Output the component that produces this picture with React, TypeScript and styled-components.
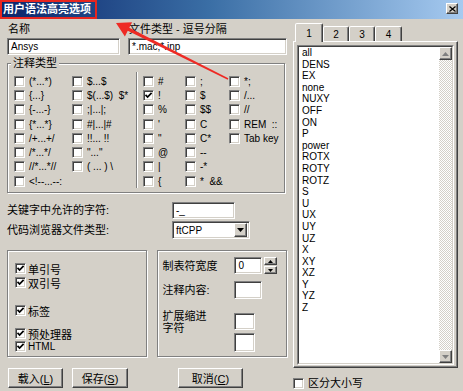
import React from "react";
import styled, { createGlobalStyle, css } from "styled-components";

const GlobalStyle = createGlobalStyle`
  html, body { margin: 0; padding: 0; background: #D4D0C8; }
  * { box-sizing: border-box; }
`;

const FONT = `"Liberation Sans", "Noto Sans CJK SC", sans-serif`;

const sunken = css`
  background: #fff;
  border: 1px solid;
  border-color: #808080 #fff #fff #808080;
  box-shadow: inset 1px 1px 0 #404040, inset -1px -1px 0 #D4D0C8;
`;

const raised = css`
  background: #D4D0C8;
  border: 1px solid;
  border-color: #fff #404040 #404040 #fff;
  box-shadow: inset -1px -1px 0 #808080;
`;

const etched = css`
  border: 1px solid #808080;
  box-shadow: 1px 1px 0 #fff, inset 1px 1px 0 #fff;
`;

const Window = styled.div`
  position: relative;
  width: 463px;
  height: 391px;
  background: #D4D0C8;
  overflow: hidden;
  font-family: ${FONT};
  color: #000;
  display: flex;
  flex-direction: column;
`;

const TitleBar = styled.div`
  height: 19px;
  flex: none;
  background: linear-gradient(to right, #0A246A 0%, #3A6EA5 45%, #A6CAF0 100%);
  display: flex;
  align-items: center;
  justify-content: space-between;
  padding: 0 5px 0 3px;
`;

const TitleText = styled.span`
  color: #fff;
  font-weight: bold;
  font-size: 11px;
  line-height: 13px;
`;

const CloseButton = styled.div`
  ${raised};
  width: 12px;
  height: 11px;
  margin-top: -2px;
  display: flex;
  align-items: center;
  justify-content: center;
`;

const Body = styled.div`
  display: flex;
  padding: 3px 0 0 7px;
`;

const LeftCol = styled.div`
  width: 280px;
  flex: none;
  display: flex;
  flex-direction: column;
`;

const FieldRow = styled.div`
  display: flex;
  gap: 8px;
`;

const Field = styled.div<{ $w: number }>`
  width: ${(p) => p.$w}px;
  display: flex;
  flex-direction: column;
  gap: 1px;
`;

const Label = styled.span<{ $size?: number }>`
  font-size: ${(p) => p.$size ?? 11}px;
  line-height: 15px;
  padding-left: 1px;
  white-space: pre;
`;

const Edit = styled.div<{ $w?: number; $h?: number }>`
  ${sunken};
  width: ${(p) => (p.$w ? `${p.$w}px` : "100%")};
  height: ${(p) => p.$h ?? 17}px;
  padding: 0 3px;
  font-size: 10px;
  display: flex;
  align-items: center;
  white-space: pre;
  flex: none;
`;

const Group = styled.fieldset`
  margin: 1px 2px 0 0;
  padding: 4px 0 4px 0;
  min-width: 0;
  ${etched};
`;

const Legend = styled.legend`
  margin-left: 3px;
  padding: 0 2px;
  font-size: 11px;
  line-height: 14px;
  background: #D4D0C8;
`;

const OptGrid = styled.div`
  display: flex;
  padding-left: 6px;
`;

const OptCol = styled.div<{ $w: number }>`
  width: ${(p) => p.$w}px;
  flex: none;
  display: flex;
  flex-direction: column;
`;

const Opt = styled.div<{ $gap?: number }>`
  height: 14.3px;
  display: flex;
  align-items: center;
  gap: ${(p) => p.$gap ?? 4}px;
  font-size: 10px;
  white-space: pre;
`;

const Separator = styled.div`
  width: 2px;
  border-left: 1px solid #808080;
  border-right: 1px solid #fff;
  margin: -2px 5px 0 0;
  flex: none;
`;

const CheckBoxFrame = styled.span`
  ${sunken};
  width: 11px;
  height: 11px;
  flex: none;
  display: flex;
  align-items: center;
  justify-content: center;
`;

const KeyGrid = styled.div`
  margin-top: 9px;
  display: grid;
  grid-template-columns: 165px auto;
  row-gap: 2px;
  align-items: center;
`;

const KeyLabel = styled.span`
  font-size: 11px;
  line-height: 15px;
`;

const Combo = styled.div`
  ${sunken};
  width: 78px;
  height: 18px;
  display: flex;
  align-items: center;
  justify-content: space-between;
  padding: 2px 2px 2px 3px;
  font-size: 10px;
`;

const ComboButton = styled.div`
  ${raised};
  width: 13px;
  height: 14px;
  display: flex;
  align-items: center;
  justify-content: center;
`;

const GroupsRow = styled.div`
  margin-top: 11px;
  display: flex;
  gap: 10px;
  height: 107px;
`;

const FlagsBox = styled.div`
  ${etched};
  width: 141px;
  padding: 11px 0 0 7px;
  display: flex;
  flex-direction: column;
`;

const Flag = styled.div<{ $mt: number; $latin?: boolean }>`
  margin-top: ${(p) => p.$mt}px;
  height: 13px;
  display: flex;
  align-items: center;
  gap: 2px;
  font-size: ${(p) => (p.$latin ? 10 : 11)}px;
`;

const SettingsBox = styled.div`
  ${etched};
  width: 130px;
  padding: 6px 0 0 4px;
  display: grid;
  grid-template-columns: 72px auto;
  row-gap: 7px;
  align-content: start;
`;

const SettingLabel = styled.span<{ $top?: boolean }>`
  font-size: 11px;
  line-height: 12px;
  align-self: ${(p) => (p.$top ? "start" : "center")};
  margin-top: ${(p) => (p.$top ? 4 : 0)}px;
`;

const Controls = styled.div<{ $mt?: number }>`
  display: flex;
  flex-direction: column;
  gap: 3px;
  margin-top: ${(p) => p.$mt ?? 0}px;
`;

const SpinWrap = styled.div`
  display: flex;
  gap: 2px;
`;

const Spinner = styled.div`
  width: 13px;
  height: 17px;
  display: flex;
  flex-direction: column;
  gap: 1px;
`;

const SpinButton = styled.div`
  ${raised};
  flex: 1;
  display: flex;
  align-items: center;
  justify-content: center;
`;

const ButtonRow = styled.div`
  margin-top: 11px;
  display: flex;
  padding-left: 1px;
`;

const Button = styled.div<{ $w: number; $ml?: number }>`
  ${raised};
  width: ${(p) => p.$w}px;
  height: 20px;
  margin-left: ${(p) => p.$ml ?? 0}px;
  font-size: 11px;
  display: flex;
  align-items: center;
  justify-content: center;
  white-space: pre;
`;

const RightCol = styled.div`
  margin-left: 6px;
  padding-top: 1px;
  display: flex;
  flex-direction: column;
`;

const TabStrip = styled.div`
  display: flex;
  align-items: flex-end;
  padding-left: 2px;
  height: 18px;
`;

const Tab = styled.div<{ $active?: boolean; $w: number }>`
  position: relative;
  z-index: ${(p) => (p.$active ? 1 : 0)};
  width: ${(p) => p.$w}px;
  height: ${(p) => (p.$active ? 19 : 15)}px;
  margin-bottom: ${(p) => (p.$active ? -1 : 0)}px;
  background: #D4D0C8;
  border: 1px solid;
  border-bottom: none;
  border-color: #fff #404040 transparent #fff;
  box-shadow: inset -1px 0 0 #808080;
  border-radius: 2px 2px 0 0;
  display: flex;
  align-items: center;
  justify-content: center;
  font-size: 10px;
  padding-top: ${(p) => (p.$active ? 0 : 1)}px;
`;

const TabPanel = styled.div`
  ${raised};
  width: 165px;
  height: 327px;
  padding: 3px 2px 2px 3px;
`;

const ListOuter = styled.div`
  width: 157px;
  height: 320px;
  border: 1px solid;
  border-color: #808080 #fff #fff #808080;
`;

const ListInner = styled.div`
  height: 100%;
  border: 1px solid;
  border-color: #404040 #D4D0C8 #D4D0C8 #404040;
  background: #fff;
  display: flex;
`;

const Items = styled.div`
  flex: 1;
  padding-left: 3px;
  font-size: 10px;
  line-height: 11.6px;
`;

const Scrollbar = styled.div`
  width: 13px;
  flex: none;
  display: flex;
  flex-direction: column;
  background-color: #D4D0C8;
  background-image: repeating-conic-gradient(#fff 0 25%, #D4D0C8 0 50%);
  background-size: 2px 2px;
`;

const ScrollButton = styled.div`
  ${raised};
  height: 13px;
  flex: none;
  display: flex;
  align-items: center;
  justify-content: center;
`;

const ScrollTrack = styled.div`
  flex: 1;
`;

const CaseRow = styled.div`
  margin-top: 9px;
  display: flex;
  align-items: center;
  gap: 4px;
  font-size: 11px;
  line-height: 13px;
`;

const Overlay = styled.svg`
  position: absolute;
  left: 0;
  top: 0;
  pointer-events: none;
`;

const Check = ({ checked }: { checked?: boolean }) => (
  <CheckBoxFrame>
    {checked && (
      <svg width="9" height="9" viewBox="0 0 9 9">
        <path d="M1.5 3.8 L3.6 6 L7.6 1.8" fill="none" stroke="#000" strokeWidth="1.7" />
      </svg>
    )}
  </CheckBoxFrame>
);

const Tri = ({ up, color = "#000" }: { up?: boolean; color?: string }) => (
  <svg width="7" height="4" viewBox="0 0 7 4">
    <path d={up ? "M0 4 L3.5 0 L7 4 Z" : "M0 0 L7 0 L3.5 4 Z"} fill={color} />
  </svg>
);

const col1 = ["(*...*)", "{...}", "{-...-}", "{*...*}", "/+...+/", "/*...*/", "//*...*//", "<!--...--:"];
const col2 = ["$...$", "$(...$)  $*", ";|...|;", "#|...|#", "!!... !!", "\"...\"", "( ... ) \\"];
const col3 = ["#", "!", "%", "'", "\"", "@", "|", "{"];
const col4 = [";", "$", "$$", "C", "C*", "--", "-*", "*  &&"];
const col5 = ["*;", "/...", "//", "REM  ::", "Tab key"];

const items = [
  "all", "DENS", "EX", "none", "NUXY", "OFF", "ON", "P", "power", "ROTX", "ROTY", "ROTZ",
  "S", "U", "UX", "UY", "UZ", "X", "XY", "XZ", "Y", "YZ", "Z",
];

const OptColumn = ({ w, labels, checked = [] }: { w: number; labels: string[]; checked?: number[] }) => (
  <OptCol $w={w}>
    {labels.map((l, i) => (
      <Opt key={i}>
        <Check checked={checked.includes(i)} />
        <span>{l}</span>
      </Opt>
    ))}
  </OptCol>
);

export default function App() {
  return (
    <Window>
      <GlobalStyle />
      <TitleBar>
        <TitleText>用户语法高亮选项</TitleText>
        <CloseButton>
          <svg width="7" height="6" viewBox="0 0 7 6">
            <path d="M0.5 0.5 L6.5 5.5 M6.5 0.5 L0.5 5.5" stroke="#000" strokeWidth="1.2" />
          </svg>
        </CloseButton>
      </TitleBar>
      <Body>
        <LeftCol>
          <FieldRow>
            <Field $w={113}>
              <Label>名称</Label>
              <Edit>Ansys</Edit>
            </Field>
            <Field $w={159}>
              <Label>文件类型 - 逗号分隔</Label>
              <Edit>*.mac;*.inp</Edit>
            </Field>
          </FieldRow>
          <Group>
            <Legend>注释类型</Legend>
            <OptGrid>
              <OptColumn w={58} labels={col1} />
              <OptColumn w={64} labels={col2} />
              <Separator />
              <OptColumn w={42} labels={col3} checked={[1]} />
              <OptColumn w={44} labels={col4} />
              <OptColumn w={56} labels={col5} />
            </OptGrid>
          </Group>
          <KeyGrid>
            <KeyLabel>关键字中允许的字符:</KeyLabel>
            <Edit $w={63}>-_</Edit>
            <KeyLabel>代码浏览器文件类型:</KeyLabel>
            <Combo>
              <span>ftCPP</span>
              <ComboButton>
                <Tri />
              </ComboButton>
            </Combo>
          </KeyGrid>
          <GroupsRow>
            <FlagsBox>
              <Flag $mt={0}>
                <Check checked />
                <span>单引号</span>
              </Flag>
              <Flag $mt={1}>
                <Check checked />
                <span>双引号</span>
              </Flag>
              <Flag $mt={15}>
                <Check checked />
                <span>标签</span>
              </Flag>
              <Flag $mt={10}>
                <Check checked />
                <span>预处理器</span>
              </Flag>
              <Flag $mt={0} $latin>
                <Check checked />
                <span>HTML</span>
              </Flag>
            </FlagsBox>
            <SettingsBox>
              <SettingLabel>制表符宽度</SettingLabel>
              <SpinWrap>
                <Edit $w={28}>0</Edit>
                <Spinner>
                  <SpinButton>
                    <svg width="5" height="3" viewBox="0 0 5 3"><path d="M0 3 L2.5 0 L5 3 Z" fill="#000" /></svg>
                  </SpinButton>
                  <SpinButton>
                    <svg width="5" height="3" viewBox="0 0 5 3"><path d="M0 0 L5 0 L2.5 3 Z" fill="#000" /></svg>
                  </SpinButton>
                </Spinner>
              </SpinWrap>
              <SettingLabel>注释内容:</SettingLabel>
              <Edit $w={28} $h={18} />
              <SettingLabel $top>
                扩展缩进
                <br />
                字符
              </SettingLabel>
              <Controls $mt={7}>
                <Edit $w={21} $h={17} />
                <Edit $w={21} $h={19} />
              </Controls>
            </SettingsBox>
          </GroupsRow>
          <ButtonRow>
            <Button $w={55}>
              <span>
                载入(<u>L</u>)
              </span>
            </Button>
            <Button $w={56} $ml={9}>
              <span>
                保存(<u>S</u>)
              </span>
            </Button>
            <Button $w={65} $ml={50}>
              <span>
                取消(<u>C</u>)
              </span>
            </Button>
          </ButtonRow>
        </LeftCol>
        <RightCol>
          <TabStrip>
            <Tab $active $w={28}>1</Tab>
            <Tab $w={26}>2</Tab>
            <Tab $w={26}>3</Tab>
            <Tab $w={27}>4</Tab>
          </TabStrip>
          <TabPanel>
            <ListOuter>
              <ListInner>
                <Items>
                  {items.map((it) => (
                    <div key={it}>{it}</div>
                  ))}
                </Items>
                <Scrollbar>
                  <ScrollButton>
                    <Tri up color="#808080" />
                  </ScrollButton>
                  <ScrollTrack />
                  <ScrollButton>
                    <Tri color="#808080" />
                  </ScrollButton>
                </Scrollbar>
              </ListInner>
            </ListOuter>
          </TabPanel>
          <CaseRow>
            <Check />
            <span>区分大小写</span>
          </CaseRow>
        </RightCol>
      </Body>
      <Overlay width="463" height="391" viewBox="0 0 463 391">
        <rect x="1" y="1" width="95" height="17" fill="none" stroke="#E8261F" strokeWidth="2" />
        <polygon points="228.3,78.3 227.7,79.7 126.2,30.1 127.8,26.9" fill="#EE2A24" />
        <polygon points="116,23 132.1,22.2 128.5,29.3 124.9,36.4" fill="#EE2A24" />
      </Overlay>
    </Window>
  );
}
